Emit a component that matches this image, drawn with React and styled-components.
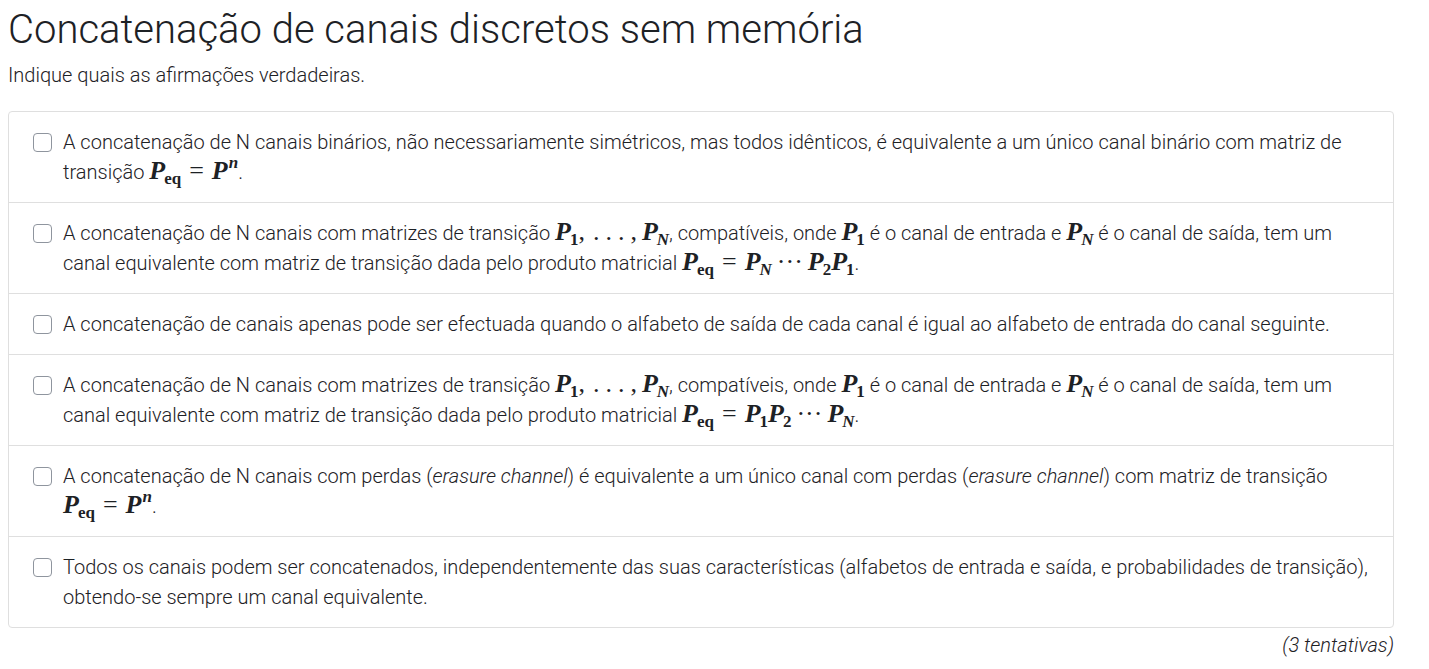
import React from 'react'
import styled, { createGlobalStyle } from 'styled-components'

const GlobalStyle = createGlobalStyle`
  body {
    margin: 8px;
    background: #fff;
    font-family: Roboto, "Liberation Sans", sans-serif;
    color: #343a40;
  }
`;

const Page = styled.div`
  width: 1386px;
`;

const Title = styled.h1`
  margin: 0;
  font-size: 40px;
  font-weight: 300;
  line-height: 44px;
  color: #1d2125;
`;

const Prompt = styled.p`
  margin: 10px 0 22px;
  font-size: 20px;
  font-weight: 300;
  line-height: 27px;
  color: #1d2125;
`;

const OptionList = styled.div`
  border: 1px solid #dfdfdf;
  border-radius: 4px;
  display: flex;
  flex-direction: column;
`;

const Option = styled.label`
  display: flex;
  align-items: flex-start;
  gap: 11px;
  padding: 15px 25px 15px 24px;
  border-top: ${p => (p.$first ? 'none' : '1px solid #dfdfdf')};
  font-size: 20px;
  font-weight: 300;
  line-height: 30px;
  color: #1d2125;
`;

const Box = styled.span`
  flex: none;
  box-sizing: border-box;
  width: 19px;
  height: 19px;
  margin-top: 6px;
  border: 1px solid #8f959e;
  border-radius: 4px;
  background: #fff;
`;

const Text = styled.span`
  flex: 1;
`;

const M = styled.span`
  font-family: "Liberation Serif", "DejaVu Serif", serif;
  font-weight: 700;
  font-style: italic;
  font-size: 26px;
  line-height: 0;
  color: #1d2125;
  white-space: nowrap;
`;

const Op = styled.span`
  font-style: normal;
  font-weight: 400;
  margin: ${p => p.$gap || '0 8px'};
`;

const Dots = styled.span`
  font-style: normal;
  font-weight: 400;
  letter-spacing: 6px;
  margin: 0 0 0 6px;
`;

const Sub = styled.sub`
  font-size: 17px;
  font-style: ${p => (p.$italic ? 'italic' : 'normal')};
  line-height: 0;
  vertical-align: -5px;
  margin-left: -1px;
`;

const Sup = styled.sup`
  font-size: 17px;
  line-height: 0;
  vertical-align: 11px;
  margin-left: 1px;
`;

const Em = styled.em`
  font-style: italic;
`;

const Attempts = styled.div`
  text-align: right;
  margin-top: 4px;
  font-size: 20px;
  font-weight: 300;
  font-style: italic;
  line-height: 27px;
  color: #1d2125;
`;

const Peq = () => (
  <>P<Sub>eq</Sub></>
);

const Range = () => (
  <M>P<Sub>1</Sub><Op $gap="0 2px 0 0">,</Op><Dots>...</Dots><Op $gap="0 5px 0 0">,</Op>P<Sub $italic>N</Sub></M>
);

const options = [
  <>
    A concatenação de N canais binários, não necessariamente simétricos, mas todos idênticos, é equivalente a um único canal binário com matriz de transição{' '}
    <M><Peq /><Op>=</Op>P<Sup>n</Sup></M>.
  </>,
  <>
    A concatenação de N canais com matrizes de transição <Range />, compatíveis, onde{' '}
    <M>P<Sub>1</Sub></M> é o canal de entrada e <M>P<Sub $italic>N</Sub></M> é o canal de saída, tem um canal equivalente com matriz de transição dada pelo produto matricial{' '}
    <M><Peq /><Op>=</Op>P<Sub $italic>N</Sub><Op $gap="0 5px">···</Op>P<Sub>2</Sub>P<Sub>1</Sub></M>.
  </>,
  <>
    A concatenação de canais apenas pode ser efectuada quando o alfabeto de saída de cada canal é igual ao alfabeto de entrada do canal seguinte.
  </>,
  <>
    A concatenação de N canais com matrizes de transição <Range />, compatíveis, onde{' '}
    <M>P<Sub>1</Sub></M> é o canal de entrada e <M>P<Sub $italic>N</Sub></M> é o canal de saída, tem um canal equivalente com matriz de transição dada pelo produto matricial{' '}
    <M><Peq /><Op>=</Op>P<Sub>1</Sub>P<Sub>2</Sub><Op $gap="0 5px">···</Op>P<Sub $italic>N</Sub></M>.
  </>,
  <>
    A concatenação de N canais com perdas (<Em>erasure channel</Em>) é equivalente a um único canal com perdas (<Em>erasure channel</Em>) com matriz de transição{' '}
    <M><Peq /><Op>=</Op>P<Sup>n</Sup></M>.
  </>,
  <>
    Todos os canais podem ser concatenados, independentemente das suas características (alfabetos de entrada e saída, e probabilidades de transição), obtendo-se sempre um canal equivalente.
  </>,
];

const App = () => {
  return (
    <Page>
      <GlobalStyle />
      <Title>Concatenação de canais discretos sem memória</Title>
      <Prompt>Indique quais as afirmações verdadeiras.</Prompt>
      <OptionList>
        {options.map((content, i) => (
          <Option key={i} $first={i === 0}>
            <Box />
            <Text>{content}</Text>
          </Option>
        ))}
      </OptionList>
      <Attempts>(3 tentativas)</Attempts>
    </Page>
  )
}

export default App
